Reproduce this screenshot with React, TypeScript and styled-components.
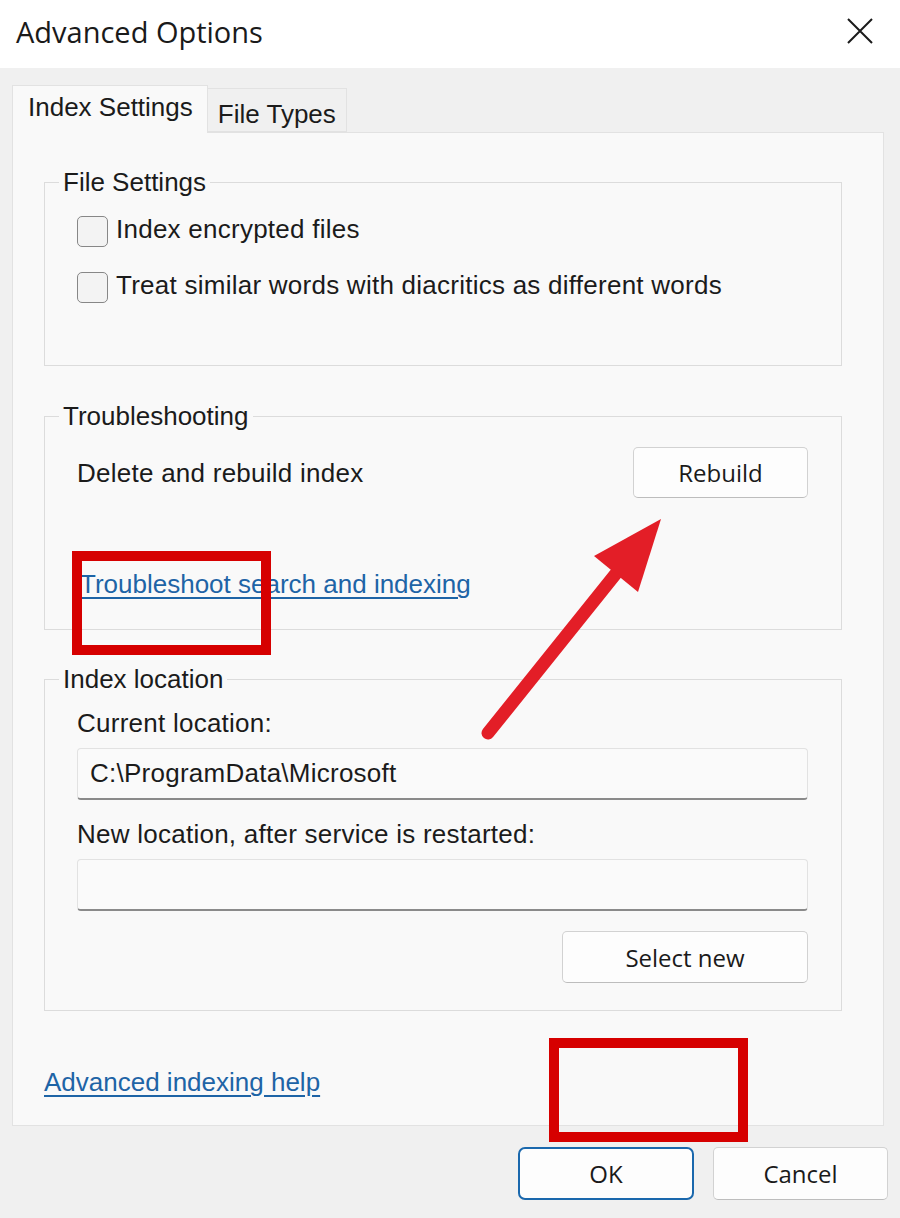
import styled, { createGlobalStyle } from 'styled-components';

const GlobalStyle = createGlobalStyle`
  html, body {
    margin: 0;
    padding: 0;
    background: #f0f0f0;
  }
  * {
    box-sizing: border-box;
  }
`;

const Window = styled.div`
  position: relative;
  width: 900px;
  height: 1218px;
  background: #f0f0f0;
  font-family: 'Liberation Sans', Arial, sans-serif;
  font-size: 26px;
  letter-spacing: 0.25px;
  color: #1b1b1b;
  overflow: hidden;
`;

const TitleBar = styled.div`
  height: 68px;
  background: #ffffff;
  display: flex;
  align-items: center;
  justify-content: space-between;
  padding: 0 27px 6px 16px;
`;

const Title = styled.div`
  font-family: 'Open Sans', 'Noto Sans', sans-serif;
  font-size: 29px;
  letter-spacing: 0;
  color: #1a1a1a;
`;

const CloseButton = styled.button`
  width: 26px;
  height: 26px;
  padding: 0;
  border: none;
  background: transparent;
  display: flex;
  align-items: center;
  justify-content: center;
`;

const Body = styled.div`
  padding: 17px 12px 0 12px;
`;

const TabStrip = styled.div`
  display: flex;
  align-items: flex-end;
  height: 47px;
  margin-right: 4px;
  position: relative;
  z-index: 1;
  letter-spacing: 0;
`;

const Tab = styled.div<{ $active?: boolean }>`
  height: ${({ $active }) => ($active ? '48px' : '44px')};
  margin-bottom: ${({ $active }) => ($active ? '-1px' : '0')};
  padding: ${({ $active }) => ($active ? '6px 14px 0 15px' : '10px 10px 0 10px')};
  background: ${({ $active }) => ($active ? '#f9f9f9' : '#f0f0f0')};
  border: 1px solid #e2e2e2;
  border-bottom: ${({ $active }) => ($active ? 'none' : '1px solid #e2e2e2')};
  border-left: ${({ $active }) => ($active ? '1px solid #e2e2e2' : 'none')};
  line-height: 30px;
  white-space: nowrap;
`;

const Panel = styled.div`
  height: 994px;
  margin-right: 4px;
  background: #f9f9f9;
  border: 1px solid #e2e2e2;
  padding: 49px 41px 0 31px;
`;

const Group = styled.div<{ $height: number; $top: number }>`
  position: relative;
  height: ${({ $height }) => $height}px;
  margin-top: ${({ $top }) => $top}px;
  border: 1px solid #dcdcdc;
  display: flex;
  flex-direction: column;
`;

// caption sitting on the group's top border, like a fieldset legend
const Legend = styled.span`
  position: absolute;
  top: -16px;
  left: 14px;
  padding: 0 4px;
  background: #f9f9f9;
  line-height: 30px;
  letter-spacing: 0;
`;

const CheckRow = styled.label`
  display: flex;
  align-items: center;
  gap: 8px;
`;

const CheckBox = styled.span`
  width: 31px;
  height: 31px;
  border: 1.5px solid #878787;
  border-radius: 5px;
  background: #f3f3f3;
  flex-shrink: 0;
`;

const CheckText = styled.span`
  line-height: 24px;
  margin-bottom: 6px;
`;

const Row = styled.div`
  display: flex;
  align-items: center;
  justify-content: space-between;
`;

const Text = styled.div`
  line-height: 30px;
`;

const Link = styled.a<{ $indent?: number }>`
  display: block;
  margin-left: ${({ $indent }) => $indent ?? 0}px;
  color: #1e64a6;
  letter-spacing: 0;
  text-decoration: underline;
  text-underline-offset: 4px;
  text-decoration-thickness: 2px;
  line-height: 30px;
  cursor: pointer;
`;

const Button = styled.button<{ $width: number; $primary?: boolean }>`
  width: ${({ $width }) => $width}px;
  height: ${({ $primary }) => ($primary ? '53px' : '51px')};
  font-family: 'Open Sans', 'Noto Sans', sans-serif;
  font-size: 24px;
  color: #1a1a1a;
  background: #fdfdfd;
  border: ${({ $primary }) => ($primary ? '2px solid #1a68ad' : '1px solid #d2d2d2')};
  border-bottom-color: ${({ $primary }) => ($primary ? '#1a68ad' : '#bdbdbd')};
  border-radius: ${({ $primary }) => ($primary ? '7px' : '5px')};
  padding: 0;
`;

const Field = styled.div`
  height: 52px;
  margin-top: 10px;
  padding: 0 12px;
  display: flex;
  align-items: center;
  background: #fafafa;
  border: 1px solid #e2e2e2;
  border-bottom: 2px solid #8a8a8a;
  border-radius: 4px;
`;

const Footer = styled.div`
  display: flex;
  justify-content: flex-end;
  gap: 19px;
  margin-top: 21px;
`;

// red markup drawn on top of the dialog
const Markup = styled.svg`
  position: absolute;
  left: 0;
  top: 0;
  pointer-events: none;
`;

export default function App() {
  return (
    <Window>
      <GlobalStyle />
      <TitleBar>
        <Title>Advanced Options</Title>
        <CloseButton aria-label="Close">
          <svg width="26" height="26" viewBox="0 0 26 26">
            <path d="M1 1 L25 25 M25 1 L1 25" stroke="#1a1a1a" strokeWidth="2" />
          </svg>
        </CloseButton>
      </TitleBar>

      <Body>
        <TabStrip>
          <Tab $active>Index Settings</Tab>
          <Tab>File Types</Tab>
        </TabStrip>

        <Panel>
          <Group $height={184} $top={0} style={{ padding: '33px 0 0 32px', gap: '25px' }}>
            <Legend>File Settings</Legend>
            <CheckRow>
              <CheckBox />
              <CheckText>Index encrypted files</CheckText>
            </CheckRow>
            <CheckRow>
              <CheckBox />
              <CheckText>Treat similar words with diacritics as different words</CheckText>
            </CheckRow>
          </Group>

          <Group $height={214} $top={50} style={{ padding: '30px 33px 0 32px' }}>
            <Legend>Troubleshooting</Legend>
            <Row>
              <Text>Delete and rebuild index</Text>
              <Button $width={175}>Rebuild</Button>
            </Row>
            <div style={{ marginTop: 71 }}>
              <Link $indent={3}>Troubleshoot search and indexing</Link>
            </div>
          </Group>

          <Group $height={332} $top={49} style={{ padding: '28px 33px 0 32px' }}>
            <Legend>Index location</Legend>
            <Text>Current location:</Text>
            <Field>C:\ProgramData\Microsoft</Field>
            <Text style={{ marginTop: 19 }}>New location, after service is restarted:</Text>
            <Field />
            <Row style={{ justifyContent: 'flex-end', marginTop: 20 }}>
              <Button $width={246} style={{ height: 52 }}>Select new</Button>
            </Row>
          </Group>

          <div style={{ marginTop: 56 }}>
            <Link>Advanced indexing help</Link>
          </div>
        </Panel>

        <Footer>
          <Button $width={176} $primary>OK</Button>
          <Button $width={175} style={{ height: 53 }}>Cancel</Button>
        </Footer>
      </Body>

      <Markup width="900" height="1218" viewBox="0 0 900 1218">
        <rect x="77" y="556" width="189" height="94" fill="none" stroke="#d60000" strokeWidth="10" />
        <rect x="554" y="1043" width="189" height="94" fill="none" stroke="#d60000" strokeWidth="10" />
        <line x1="488" y1="733" x2="622" y2="566" stroke="#e31e27" strokeWidth="13" strokeLinecap="round" />
        <polygon points="661,519 594,556 638,592" fill="#e31e27" />
      </Markup>
    </Window>
  );
}
